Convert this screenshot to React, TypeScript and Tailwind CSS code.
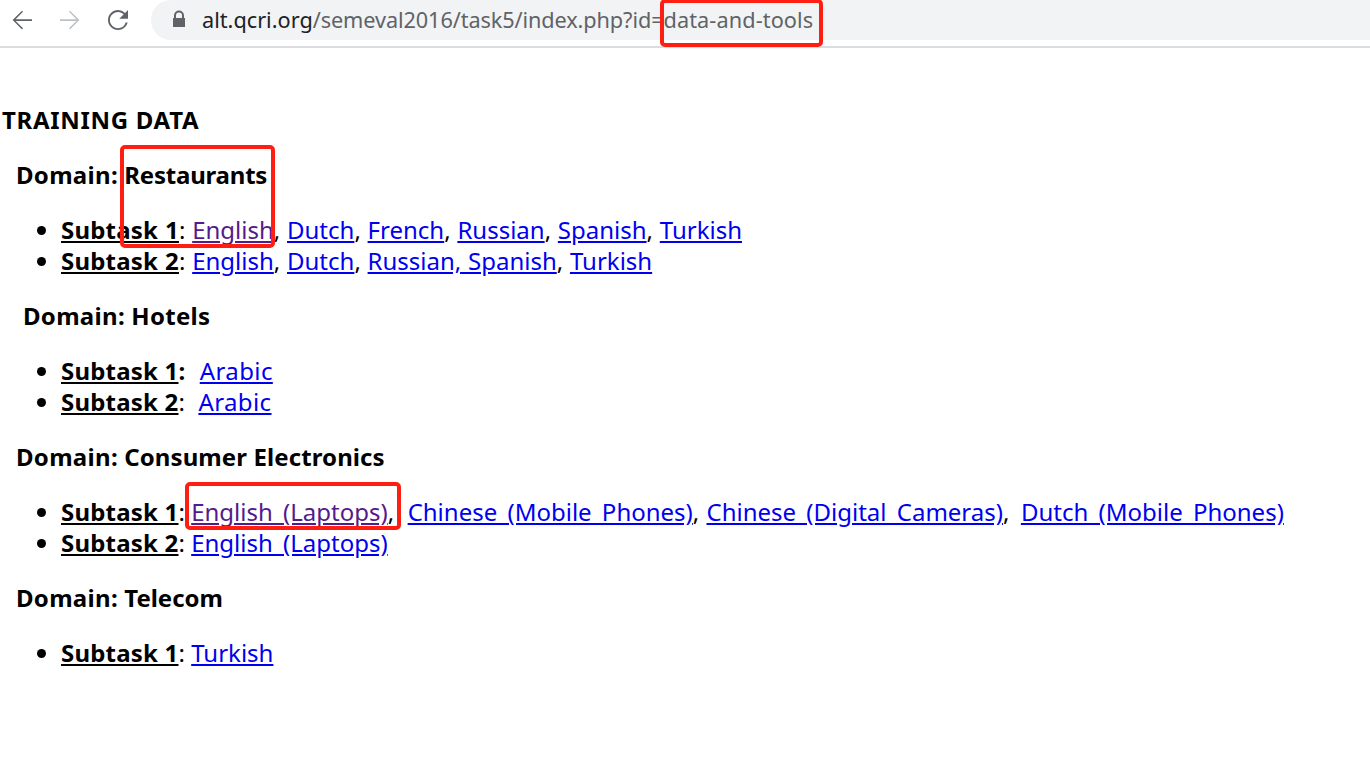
const A = ({ children, className = '' }: { children: React.ReactNode; className?: string }) => (
  <a href="#" className={`text-[#0000ee] underline ${className}`}>{children}</a>
);
const V = ({ children, className = '' }: { children: React.ReactNode; className?: string }) => (
  <a href="#" className={`text-[#551a8b] underline ${className}`}>{children}</a>
);
const S = ({ children }: { children: React.ReactNode }) => (
  <b className="font-bold underline tracking-[0.2px]">{children}</b>
);

function Toolbar() {
  return (
    <div className="h-[48px] border-b-2 border-[#dadce0] bg-white flex items-start">
      <div className="flex items-center pl-[7px] h-[40px] gap-[18px]">
        <svg width="30" height="30" viewBox="0 0 24 24" fill="#5f6368">
          <path d="M20 11.3H6.9l5.9-5.9-.8-.9L4.5 12l7.5 7.5.8-.9-5.9-5.9H20z" />
        </svg>
        <svg width="30" height="30" viewBox="0 0 24 24" fill="#bdc1c6">
          <path d="M4 11.3h13.1l-5.9-5.9.8-.9 7.5 7.5-7.5 7.5-.8-.9 5.9-5.9H4z" />
        </svg>
        <svg width="30" height="30" viewBox="0 0 24 24" fill="#5f6368">
          <path d="M17.65 6.35A7.958 7.958 0 0 0 12 4c-4.42 0-7.99 3.58-7.99 8s3.57 8 7.99 8c3.73 0 6.84-2.55 7.73-6h-1.6A6.5 6.5 0 0 1 12 18.5c-3.59 0-6.5-2.91-6.5-6.5S8.41 5.5 12 5.5c1.8 0 3.4.75 4.6 1.9L13 11h7V4z" />
        </svg>
      </div>
      <div className="ml-[18px] flex-1 h-[40px] bg-[#f1f3f4] rounded-l-[20px] flex items-center pl-[20px] pb-[2px] text-[21.7px] font-['Noto_Sans',sans-serif]">
        <svg width="16" height="18" viewBox="0 0 16 18" className="mr-[15px]">
          <path d="M3 8V5.5a5 5 0 0 1 10 0V8h1v9H2V8zm2 0h6V5.5a3 3 0 0 0-6 0z" fill="#5f6368" />
        </svg>
        <span className="text-[#202124]">alt.qcri.org</span>
        <span className="text-[#5f6368] tracking-[-0.1px]">/semeval2016/task5/index.php?id=</span>
        <span className="text-[#5f6368] tracking-[0.1px]">data-and-tools</span>
      </div>
    </div>
  );
}

function Domain({ name, className, nameClass }: { name: string; className: string; nameClass: string }) {
  return (
    <p className={`mt-[24px] font-bold ${className}`}>
      <span className="tracking-[0.3px]">Domain:</span> <span className={nameClass}>{name}</span>
    </p>
  );
}

export default function App() {
  return (
    <div className="relative min-h-[769px] bg-white text-black font-['Noto_Sans',sans-serif] text-[24px] leading-[31px] overflow-hidden">
      <Toolbar />
      <main className="pt-[56px]">
        <p className="pl-[2px] font-bold tracking-[0.7px]">TRAINING DATA</p>

        <Domain name="Restaurants" className="pl-[16px]" nameClass="tracking-[-0.2px]" />
        <ul className="list-disc pl-[61px] mt-[24px] [word-spacing:0.5px]">
          <li><S>Subtask 1</S>: <V>English</V>, <A>Dutch</A>, <A>French</A>, <A>Russian</A>, <A>Spanish</A>, <A>Turkish</A></li>
          <li><S>Subtask 2</S>: <A>English</A>, <A>Dutch</A>, <A>Russian, Spanish</A>, <A>Turkish</A></li>
        </ul>

        <Domain name="Hotels" className="pl-[23px]" nameClass="tracking-[0.3px]" />
        <ul className="list-disc pl-[61px] mt-[24px]">
          <li><S>Subtask 1</S><b>:</b>&nbsp; <A className="ml-[2px] tracking-[0.4px]">Arabic</A></li>
          <li><S>Subtask 2</S>:&nbsp; <A className="ml-[1px] tracking-[0.4px]">Arabic</A></li>
        </ul>

        <Domain name="Consumer Electronics" className="pl-[16px]" nameClass="tracking-[0.1px]" />
        <ul className="list-disc pl-[61px] mt-[24px]">
          <li><S>Subtask 1</S>: <V className="[word-spacing:4px]">English (Laptops)</V>,&nbsp; <A className="ml-[1px] [word-spacing:4px]">Chinese (Mobile Phones)</A>, <A className="ml-[1px] [word-spacing:4px]">Chinese (Digital Cameras)</A>,&nbsp; <A className="-ml-[1px] [word-spacing:4px]">Dutch (Mobile Phones)</A></li>
          <li><S>Subtask 2</S>: <A className="[word-spacing:4px]">English (Laptops)</A></li>
        </ul>

        <Domain name="Telecom" className="pl-[16px]" nameClass="" />
        <ul className="list-disc pl-[61px] mt-[24px]">
          <li><S>Subtask 1</S>: <A>Turkish</A></li>
        </ul>
      </main>

      {/* red annotation boxes over the screenshot */}
      <div className="absolute left-[660px] top-[-1px] w-[163px] h-[48px] border-[4px] border-[#fe1e12] rounded-[5px]" />
      <div className="absolute left-[120px] top-[145px] w-[155px] h-[103px] border-[4px] border-[#fe1e12] rounded-[5px]" />
      <div className="absolute left-[185px] top-[482px] w-[216px] h-[48px] border-[4px] border-[#fe1e12] rounded-[5px]" />
    </div>
  );
}
